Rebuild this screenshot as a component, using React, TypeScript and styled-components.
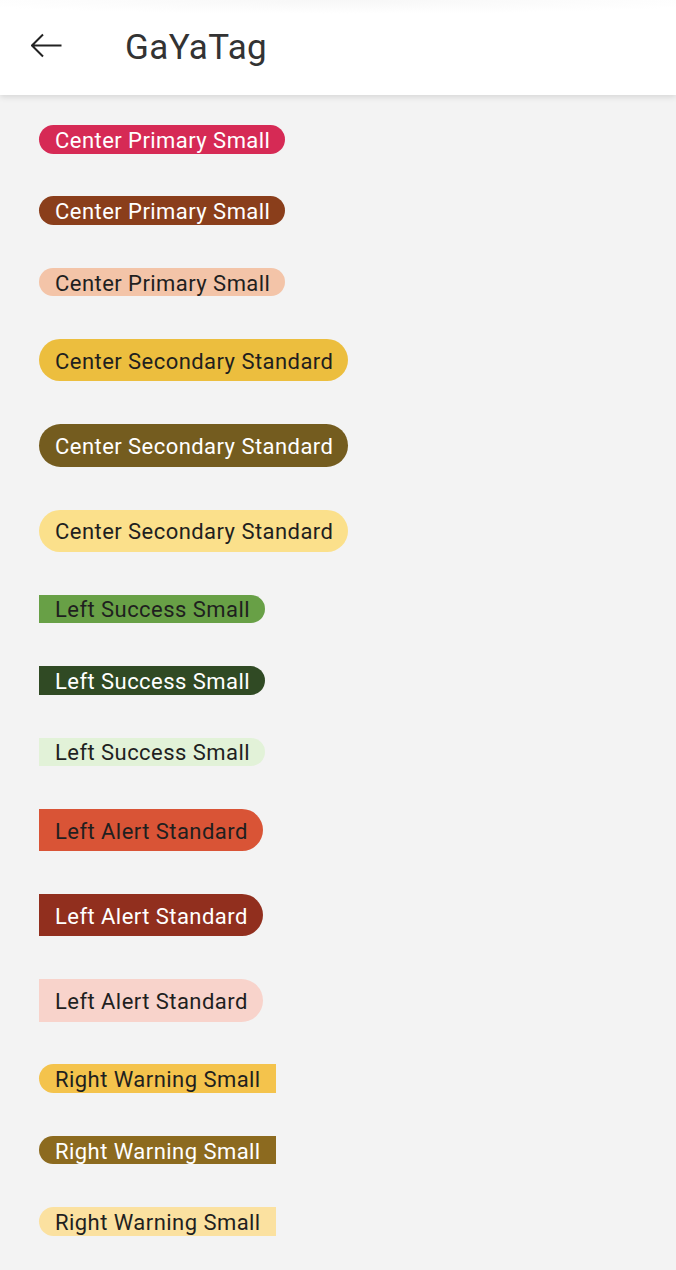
import React from "react";
import styled, { createGlobalStyle, css } from "styled-components";

const Global = createGlobalStyle`
  html, body { margin: 0; padding: 0; background: #f3f3f3; }
  body { font-family: Roboto, "Noto Sans", sans-serif; }
`;

const Page = styled.div`
  min-height: 1270px;
  background: #f3f3f3;
`;

const Header = styled.header`
  height: 95px;
  display: flex;
  align-items: center;
  padding-left: 31px;
  background: radial-gradient(ellipse 60% 14px at 50% 0, #f7f7f7, #ffffff);
  box-shadow: 0 2px 6px rgba(0, 0, 0, 0.12);
  position: relative;
  z-index: 1;
`;

const BackButton = styled.button`
  width: 32px;
  height: 26px;
  padding: 0;
  border: 0;
  background: none;
  display: flex;
  align-items: center;
  margin-top: -3px;
`;

const Title = styled.h1`
  margin: 0 0 0 62px;
  font-size: 35px;
  font-weight: 400;
  color: #333333;
  letter-spacing: 0.4px;
`;

const List = styled.main`
  display: flex;
  flex-direction: column;
  align-items: flex-start;
  gap: 42.9px;
  padding: 30px 0 0 39px;
`;

type Align = "center" | "left" | "right";
type Size = "small" | "standard";

const Tag = styled.span<{ $bg: string; $fg: string; $align: Align; $size: Size }>`
  display: inline-flex;
  align-items: center;
  box-sizing: border-box;
  height: ${(p) => (p.$size === "small" ? "28.5px" : "42.3px")};
  padding: 2px 15px 0 16px;
  background: ${(p) => p.$bg};
  color: ${(p) => p.$fg};
  font-size: 22px;
  letter-spacing: 0.45px;
  white-space: nowrap;
  ${(p) =>
    p.$align === "center"
      ? css`border-radius: 999px;`
      : p.$align === "left"
      ? css`border-radius: 0 999px 999px 0;`
      : css`border-radius: 999px 0 0 999px;`}
`;

const DARK = "#1f1f1f";
const LIGHT = "#ffffff";

const tags: { label: string; bg: string; fg: string; align: Align; size: Size }[] = [
  { label: "Center Primary Small", bg: "#d62a55", fg: LIGHT, align: "center", size: "small" },
  { label: "Center Primary Small", bg: "#8a3e1b", fg: LIGHT, align: "center", size: "small" },
  { label: "Center Primary Small", bg: "#f3c4a8", fg: DARK, align: "center", size: "small" },
  { label: "Center Secondary Standard", bg: "#ecbe3e", fg: DARK, align: "center", size: "standard" },
  { label: "Center Secondary Standard", bg: "#745c1f", fg: LIGHT, align: "center", size: "standard" },
  { label: "Center Secondary Standard", bg: "#fbe08b", fg: DARK, align: "center", size: "standard" },
  { label: "Left Success Small", bg: "#68a046", fg: DARK, align: "left", size: "small" },
  { label: "Left Success Small", bg: "#304a24", fg: LIGHT, align: "left", size: "small" },
  { label: "Left Success Small", bg: "#e2f2d8", fg: DARK, align: "left", size: "small" },
  { label: "Left Alert Standard", bg: "#d95436", fg: DARK, align: "left", size: "standard" },
  { label: "Left Alert Standard", bg: "#912f1e", fg: LIGHT, align: "left", size: "standard" },
  { label: "Left Alert Standard", bg: "#f8d3cb", fg: DARK, align: "left", size: "standard" },
  { label: "Right Warning Small", bg: "#f4c34c", fg: DARK, align: "right", size: "small" },
  { label: "Right Warning Small", bg: "#8c6a1f", fg: LIGHT, align: "right", size: "small" },
  { label: "Right Warning Small", bg: "#fbe1a0", fg: DARK, align: "right", size: "small" },
];

export default function App() {
  return (
    <Page>
      <Global />
      <Header>
        <BackButton aria-label="Back">
          <svg width="32" height="26" viewBox="0 0 32 26" fill="none">
            <path d="M1 12.5H30.5M12 1.5L1 12.5L12 23.5" stroke="#222" strokeWidth="2" />
          </svg>
        </BackButton>
        <Title>GaYaTag</Title>
      </Header>
      <List>
        {tags.map((t, i) => (
          <Tag key={i} $bg={t.bg} $fg={t.fg} $align={t.align} $size={t.size}>
            {t.label}
          </Tag>
        ))}
      </List>
    </Page>
  );
}
